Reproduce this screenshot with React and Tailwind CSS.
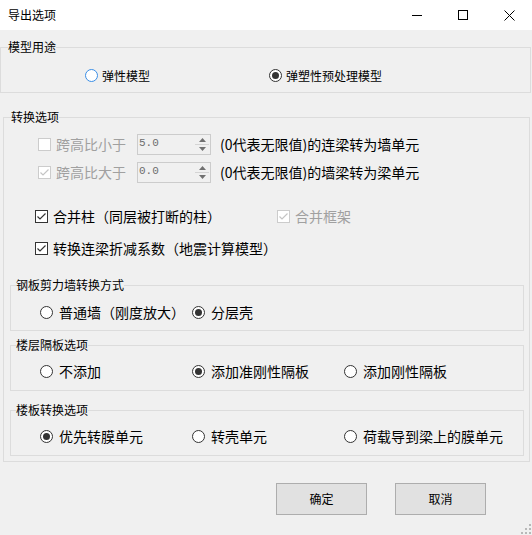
import React from "react";

function Radio({ checked, focus }) {
  return (
    <span
      className={`w-[13px] h-[13px] rounded-full border ${
        focus ? "border-[#3a8ee6]" : "border-[#333333]"
      } bg-white flex items-center justify-center shrink-0`}
    >
      {checked && <span className="w-[7px] h-[7px] rounded-full bg-[#333333]" />}
    </span>
  );
}

function Check({ checked, disabled }) {
  return (
    <span
      className={`w-[13px] h-[13px] border ${
        disabled ? "border-[#cccccc]" : "border-[#333333]"
      } bg-white flex items-center justify-center shrink-0`}
    >
      {checked && (
        <svg width="11" height="11" viewBox="0 0 11 11">
          <path
            d="M1.5 5.5 L4 8 L9.5 2.5"
            fill="none"
            stroke={disabled ? "#c4c4c4" : "#333333"}
            strokeWidth="1.2"
          />
        </svg>
      )}
    </span>
  );
}

function Spin({ value }) {
  return (
    <div className="w-[74px] h-[21px] border border-[#cccccc] bg-[#f0f0f0] flex shrink-0">
      <span className="flex-1 pl-[1px] pt-[1px] font-['Liberation_Mono',monospace] text-[11px] leading-[14px] text-[#6d6d6d]">
        {value}
      </span>
      <div className="w-[15px] flex flex-col py-[1px] pr-[1px]">
        <div className="flex-1 flex items-center justify-center border-b border-[#d4d4d4]">
          <svg width="7" height="4" viewBox="0 0 7 4">
            <path d="M0 4 L3.5 0 L7 4 Z" fill="#707070" />
          </svg>
        </div>
        <div className="flex-1 flex items-center justify-center">
          <svg width="7" height="4" viewBox="0 0 7 4">
            <path d="M0 0 L3.5 4 L7 0 Z" fill="#707070" />
          </svg>
        </div>
      </div>
    </div>
  );
}

function Legend({ children, ml }) {
  return (
    <legend className={`${ml} text-[12px] leading-[14px] text-black`}>{children}</legend>
  );
}

function Opt({ checked, label, w, focus }) {
  return (
    <div className={`flex items-center ${w} shrink-0`}>
      <Radio checked={checked} focus={focus} />
      <span className="ml-[6px] text-[14px] leading-[17px] whitespace-nowrap">{label}</span>
    </div>
  );
}

export default function App() {
  return (
    <div className="w-[532px] h-[535px] bg-[#f0f0f0] relative overflow-hidden font-['Noto_Sans_CJK_SC',sans-serif] text-black">
      {/* Title bar */}
      <div className="h-[30px] bg-white flex items-center">
        <span className="pl-[8px] text-[12px] leading-[14px] flex-1">导出选项</span>
        <div className="flex h-full">
          <div className="w-[46px] h-full flex items-center justify-center">
            <svg width="10" height="10" viewBox="0 0 10 10">
              <path d="M0 5.5 H10" stroke="#000" strokeWidth="1" />
            </svg>
          </div>
          <div className="w-[46px] h-full flex items-center justify-center">
            <svg width="10" height="10" viewBox="0 0 10 10">
              <rect x="0.5" y="0.5" width="9" height="9" fill="none" stroke="#000" strokeWidth="1" />
            </svg>
          </div>
          <div className="w-[46px] h-full flex items-center justify-center">
            <svg width="11" height="11" viewBox="0 0 11 11">
              <path d="M0.5 0.5 L10.5 10.5 M10.5 0.5 L0.5 10.5" stroke="#000" strokeWidth="1" />
            </svg>
          </div>
        </div>
      </div>

      {/* Group 1 */}
      <fieldset className="mt-[10px] ml-0 w-[531px] border border-[#dcdcdc]">
        <Legend ml="ml-[7px]">模型用途</Legend>
        <div className="flex items-center h-[17px] mt-[13px] mb-[8px] pl-[84px]">
          <div className="flex items-center w-[184px] shrink-0">
            <Radio focus />
            <span className="ml-[4px] text-[12px] leading-[17px]">弹性模型</span>
          </div>
          <div className="flex items-center">
            <Radio checked />
            <span className="ml-[4px] text-[12px] leading-[17px]">弹塑性预处理模型</span>
          </div>
        </div>
      </fieldset>

      {/* Group 2 */}
      <fieldset className="mt-[17px] ml-[3px] w-[527px] border border-[#dcdcdc] pb-[5px]">
        <Legend ml="ml-[7px]">转换选项</Legend>

        <div className="flex items-center h-[21px] mt-[10px] pl-[34px]">
          <Check disabled />
          <span className="ml-[5px] w-[81px] text-[14px] leading-[17px] text-[#a0a0a0]">跨高比小于</span>
          <Spin value="5.0" />
          <span className="ml-[9px] text-[14px] leading-[17px] whitespace-nowrap">(0代表无限值)的连梁转为墙单元</span>
        </div>
        <div className="flex items-center h-[21px] mt-[7px] pl-[34px]">
          <Check disabled checked />
          <span className="ml-[5px] w-[81px] text-[14px] leading-[17px] text-[#a0a0a0]">跨高比大于</span>
          <Spin value="0.0" />
          <span className="ml-[9px] text-[14px] leading-[17px] whitespace-nowrap">(0代表无限值)的墙梁转为梁单元</span>
        </div>

        <div className="flex items-center h-[17px] mt-[25px] pl-[31px]">
          <div className="flex items-center w-[242px] shrink-0">
            <Check checked />
            <span className="ml-[5px] text-[14px] leading-[17px] whitespace-nowrap">合并柱（同层被打断的柱）</span>
          </div>
          <div className="flex items-center">
            <Check checked disabled />
            <span className="ml-[5px] text-[14px] leading-[17px] text-[#a0a0a0]">合并框架</span>
          </div>
        </div>
        <div className="flex items-center h-[17px] mt-[15px] pl-[31px]">
          <Check checked />
          <span className="ml-[5px] text-[14px] leading-[17px] whitespace-nowrap">转换连梁折减系数（地震计算模型）</span>
        </div>

        <fieldset className="mt-[21px] ml-[6px] w-[514px] border border-[#dcdcdc]">
          <Legend ml="ml-[5px]">钢板剪力墙转换方式</Legend>
          <div className="flex items-center h-[17px] mt-[12px] mb-[9px] pl-[29px]">
            <Opt w="w-[152px]" label="普通墙（刚度放大）" />
            <Opt w="w-[152px]" checked label="分层壳" />
          </div>
        </fieldset>

        <fieldset className="mt-[7px] ml-[6px] w-[514px] border border-[#dcdcdc]">
          <Legend ml="ml-[5px]">楼层隔板选项</Legend>
          <div className="flex items-center h-[17px] mt-[11px] mb-[10px] pl-[29px]">
            <Opt w="w-[152px]" label="不添加" />
            <Opt w="w-[152px]" checked label="添加准刚性隔板" />
            <Opt w="w-[150px]" label="添加刚性隔板" />
          </div>
        </fieldset>

        <fieldset className="mt-[12px] ml-[6px] w-[514px] border border-[#dcdcdc]">
          <Legend ml="ml-[5px]">楼板转换选项</Legend>
          <div className="flex items-center h-[17px] mt-[11px] mb-[10px] pl-[29px]">
            <Opt w="w-[152px]" checked label="优先转膜单元" />
            <Opt w="w-[152px]" label="转壳单元" />
            <Opt w="w-[160px]" label="荷载导到梁上的膜单元" />
          </div>
        </fieldset>
      </fieldset>

      {/* Buttons */}
      <div className="flex mt-[21px] pl-[276px] gap-[28px]">
        <button className="w-[91px] h-[32px] bg-[#e1e1e1] border border-[#adadad] text-[12px] leading-[14px]">确定</button>
        <button className="w-[91px] h-[32px] bg-[#e1e1e1] border border-[#adadad] text-[12px] leading-[14px]">取消</button>
      </div>

      {/* Resize grip */}
      <svg className="absolute right-[1px] bottom-[1px]" width="10" height="10" viewBox="0 0 10 10">
        <rect x="8" y="0" width="2" height="2" fill="#b8b8b8" />
        <rect x="4" y="4" width="2" height="2" fill="#b8b8b8" />
        <rect x="8" y="4" width="2" height="2" fill="#b8b8b8" />
        <rect x="0" y="8" width="2" height="2" fill="#b8b8b8" />
        <rect x="4" y="8" width="2" height="2" fill="#b8b8b8" />
        <rect x="8" y="8" width="2" height="2" fill="#b8b8b8" />
      </svg>
    </div>
  );
}
